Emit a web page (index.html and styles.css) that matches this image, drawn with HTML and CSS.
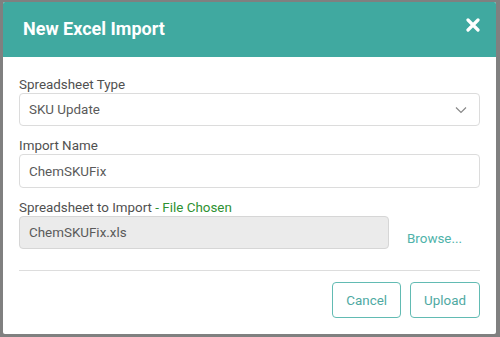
FILE: index.html
```html
<!DOCTYPE html>
<html lang="en">
<head>
  <meta charset="UTF-8" />
  <title>New Excel Import</title>
  <link rel="stylesheet" href="styles.css">
</head>
<body>
  <div class="modal">
    <div class="modal-header">
      <h1>New Excel Import</h1>
      <button class="close" aria-label="Close">
        <svg width="14" height="14" viewBox="0 0 14 14">
          <path d="M2 2 L12 12 M12 2 L2 12" stroke="#fff" stroke-width="3.2" stroke-linecap="round" />
        </svg>
      </button>
    </div>

    <div class="modal-body">
      <div class="field">
        <label>Spreadsheet Type</label>
        <div class="select">
          <span>SKU Update</span>
          <svg width="12" height="8" viewBox="0 0 12 8">
            <path d="M1 1.5 L6 6.5 L11 1.5" fill="none" stroke="#888" stroke-width="1.2" />
          </svg>
        </div>
      </div>

      <div class="field">
        <label>Import Name</label>
        <div class="input">ChemSKUFix</div>
      </div>

      <div class="field last">
        <label>Spreadsheet to Import <span class="ok">- File Chosen</span></label>
        <div class="file-row">
          <div class="input file">ChemSKUFix.xls</div>
          <a class="browse" href="#">Browse...</a>
        </div>
      </div>
    </div>

    <div class="modal-footer">
      <button class="btn">Cancel</button>
      <button class="btn">Upload</button>
    </div>
  </div>
</body>
</html>
```

FILE: styles.css
```css
body {
  margin: 0;
  padding: 2px 4px 3px 3px;
  background-color: #808080;
  font-family: Roboto, "Liberation Sans", Arial, sans-serif;
  height: 337px;
  box-sizing: border-box;
}

.modal {
  background-color: #ffffff;
  height: 332px;
  border-radius: 2px;
  overflow: hidden;
}

.modal-header {
  background-color: #40a9a0;
  height: 55px;
  display: flex;
  align-items: center;
  justify-content: space-between;
  padding: 0 16px 0 20px;
}

.modal-header h1 {
  margin: 0;
  color: #ffffff;
  font-size: 18px;
  font-weight: 700;
  padding-bottom: 2px;
}

.close {
  background: none;
  border: none;
  padding: 0;
  margin-bottom: 10px;
  cursor: pointer;
  display: flex;
}

.modal-body {
  padding: 19px 16px 0 16px;
}

.field {
  margin-bottom: 11px;
}

.field.last {
  margin-bottom: 0;
}

.field label {
  display: block;
  font-size: 13.4px;
  line-height: 17px;
  color: #505050;
}

.ok {
  color: #2e9132;
}

.select,
.input {
  box-sizing: border-box;
  height: 33px;
  border: 1px solid #dcdcdc;
  border-radius: 4px;
  padding: 0 12px 0 9px;
  display: flex;
  align-items: center;
  justify-content: space-between;
  font-size: 13.4px;
  color: #5a5a5a;
}

.input {
  height: 34px;
}

.file-row {
  display: flex;
  align-items: flex-end;
}

.input.file {
  width: 370px;
  background-color: #ebebeb;
  border-color: #d6d6d6;
  height: 33px;
}

.browse {
  margin-left: 18px;
  margin-bottom: 3px;
  font-size: 13.4px;
  color: #4fb3aa;
  text-decoration: none;
}

.modal-footer {
  margin: 21px 16px 0 16px;
  padding-top: 11px;
  border-top: 1px solid #dddddd;
  display: flex;
  justify-content: flex-end;
  gap: 9px;
}

.btn {
  height: 36px;
  padding: 0 13px;
  font-family: inherit;
  font-size: 13.4px;
  color: #4fa9a2;
  background-color: #ffffff;
  border: 1px solid #62bbb3;
  border-radius: 4px;
  cursor: pointer;
}
```
